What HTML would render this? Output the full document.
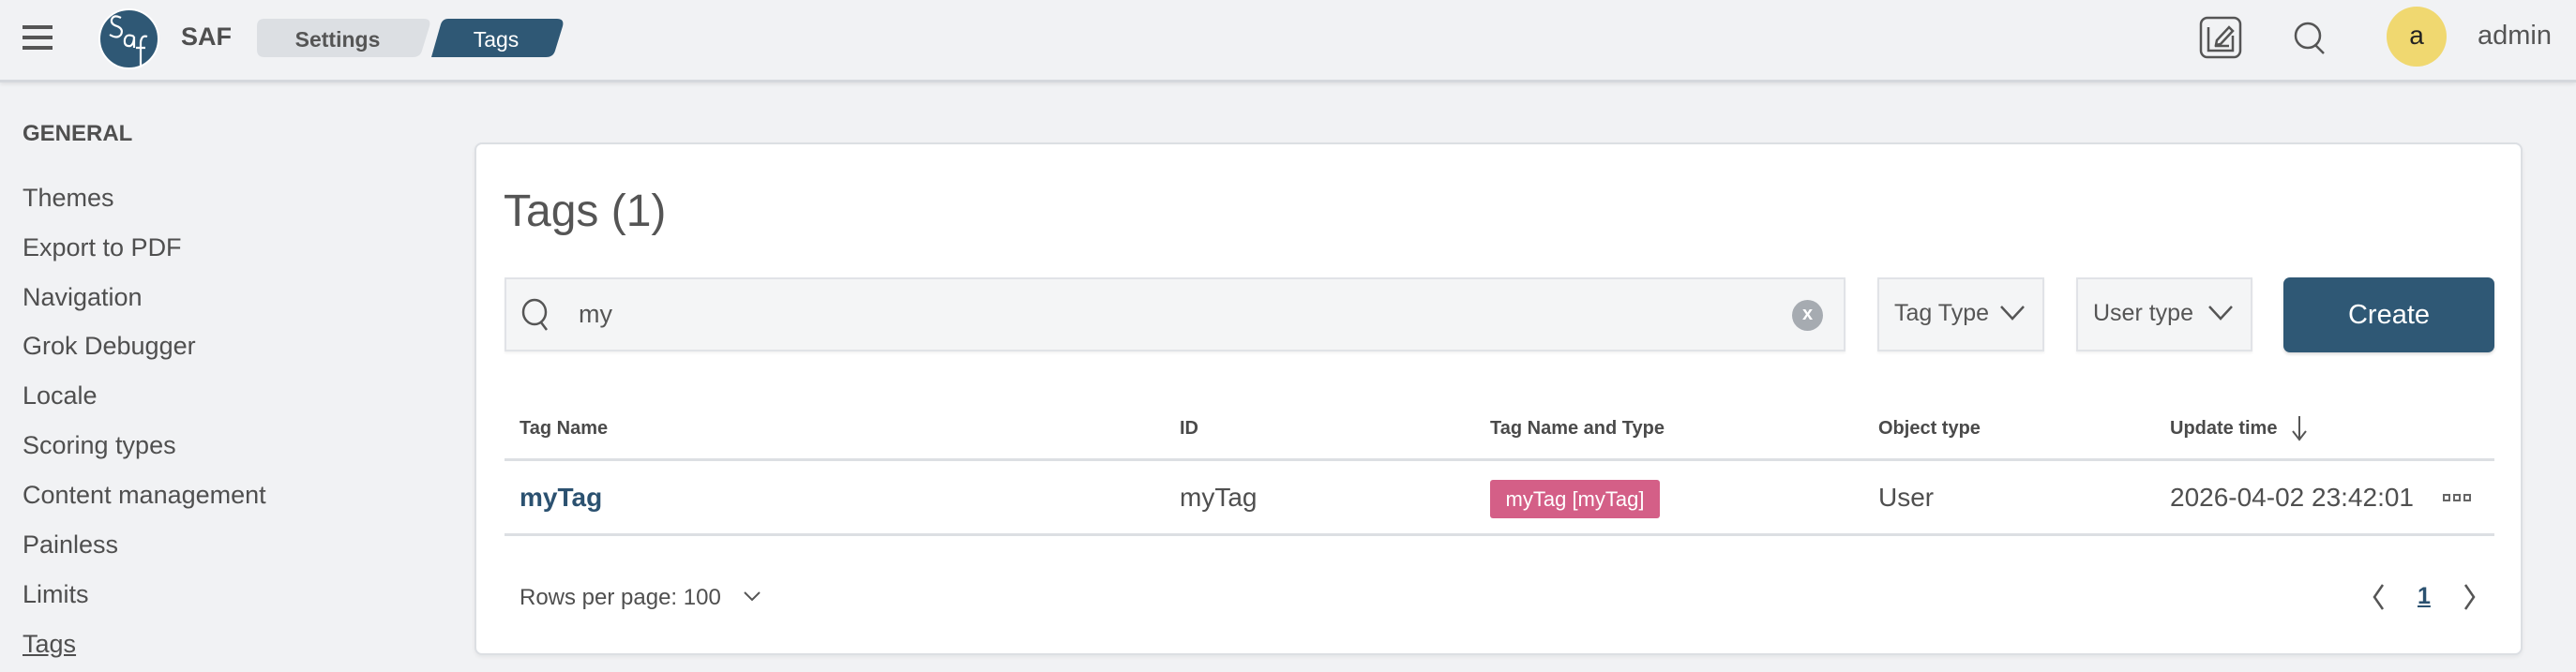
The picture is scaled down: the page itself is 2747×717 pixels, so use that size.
<!DOCTYPE html>
<html><head><meta charset="utf-8"><style>
*{margin:0;padding:0;box-sizing:border-box}
body{width:2747px;height:717px;background:#f1f2f4;font-family:"Liberation Sans",sans-serif;color:#535353;position:relative;overflow:hidden}
.abs{position:absolute}
.hdr{left:0;top:0;width:2747px;height:88px;background:#f1f2f4;border-bottom:3px solid #d5d8dd;box-shadow:0 2px 4px rgba(0,0,0,.08)}
.side{left:24px;font-size:27px;color:#4f4f4f}
.card{left:506px;top:152px;width:2184px;height:547px;background:#fff;border:2px solid #dcdfe3;border-radius:8px;box-shadow:0 2px 4px rgba(0,0,0,.06)}
.th{font-size:20px;font-weight:bold;color:#4a4a4a;top:446px}
.td{font-size:28px;color:#4f4f4f;top:515px}
.box{background:#f4f5f6;border:2px solid #e1e3e7;box-shadow:0 2px 2px rgba(0,0,0,.05)}
</style></head><body>
<div class="abs hdr"></div>
<div class="abs" style="left:24px;top:27px;width:32px;height:4px;background:#555"></div>
<div class="abs" style="left:24px;top:38px;width:32px;height:4px;background:#555"></div>
<div class="abs" style="left:24px;top:49px;width:32px;height:4px;background:#555"></div>
<div class="abs" style="left:105px;top:9px;width:65px;height:65px;border-radius:50%;background:#2f5875;border:2px solid #fff"></div>
<svg class="abs" style="left:105px;top:9px" width="65" height="65" fill="none" stroke="#fff" stroke-width="2.2">
<path d="M24 10 Q16 6 14 12 Q13 17 20 19 Q27 22 24 28 Q20 33 12 28"/>
<path d="M38 30 Q30 26 28 33 Q27 41 34 40 Q38 38 38 30 V42"/>
<path d="M52 30 Q46 28 45 36 V63 M40 42 H50"/>
</svg>
<div class="abs" style="left:193px;top:24px;font-size:27px;font-weight:bold;color:#4f4f4f">SAF</div>
<svg class="abs" style="left:274px;top:20px" width="330" height="42">
<path d="M8 0 H178 Q186 0 184 8 L176 34 Q174 41 166 41 H8 Q0 41 0 33 V8 Q0 0 8 0Z" fill="#dcdfe3"/>
<path d="M200 0 H320 Q328 0 326 8 L318 34 Q316 41 308 41 H186 L196 6 Q198 0 204 0Z" fill="#2f5875"/>
<text x="86" y="30" text-anchor="middle" font-family="Liberation Sans" font-weight="bold" font-size="23" fill="#555">Settings</text>
<text x="255" y="30" text-anchor="middle" font-family="Liberation Sans" font-size="23" fill="#fff">Tags</text>
</svg>
<svg class="abs" style="left:2345px;top:17px" width="46" height="46" fill="none" stroke="#555" stroke-width="2.5">
<rect x="2" y="2" width="42" height="42" rx="7"/>
<path d="M10 12 V37 H36 V21"/><path d="M17 32 H32"/><path d="M19 26 L32 12 L36 16 L23 30 L18 31Z"/>
</svg>
<svg class="abs" style="left:2446px;top:23px" width="36" height="36" fill="none" stroke="#555" stroke-width="2.5">
<circle cx="15" cy="15" r="13"/><path d="M23 25 L32 34"/>
</svg>
<div class="abs" style="left:2545px;top:7px;width:64px;height:64px;border-radius:50%;background:#f0d870;text-align:center;line-height:62px;font-size:28px;color:#222">a</div>
<div class="abs" style="left:2642px;top:22px;font-size:29px;color:#555">admin</div>
<div class="abs side" style="top:129px;font-weight:bold;font-size:24px">GENERAL</div>
<div class="abs side" style="top:196px">Themes</div>
<div class="abs side" style="top:249px">Export to PDF</div>
<div class="abs side" style="top:302px">Navigation</div>
<div class="abs side" style="top:354px">Grok Debugger</div>
<div class="abs side" style="top:407px">Locale</div>
<div class="abs side" style="top:460px">Scoring types</div>
<div class="abs side" style="top:513px">Content management</div>
<div class="abs side" style="top:566px">Painless</div>
<div class="abs side" style="top:619px">Limits</div>
<div class="abs side" style="top:672px;text-decoration:underline">Tags</div>
<div class="abs card"></div>
<div class="abs" style="left:537px;top:198px;font-size:48px;color:#555">Tags (1)</div>
<div class="abs box" style="left:538px;top:296px;width:1430px;height:79px"></div>
<svg class="abs" style="left:556px;top:318px" width="34" height="38" fill="none" stroke="#555" stroke-width="2.5"><ellipse cx="14" cy="15" rx="12" ry="13"/><path d="M21 26 L27 34"/></svg>
<div class="abs" style="left:617px;top:320px;font-size:27px;color:#555">my</div>
<div class="abs" style="left:1911px;top:320px;width:33px;height:33px;border-radius:50%;background:#a6abb1;color:#fff;text-align:center;line-height:31px;font-size:20px;font-weight:bold">x</div>
<div class="abs box" style="left:2002px;top:296px;width:178px;height:79px"></div>
<div class="abs" style="left:2020px;top:320px;font-size:25px;color:#555">Tag Type</div>
<svg class="abs" style="left:2132px;top:325px" width="28" height="18" fill="none" stroke="#555" stroke-width="2.5"><path d="M2 2 L14 15 L26 2"/></svg>
<div class="abs box" style="left:2214px;top:296px;width:188px;height:79px"></div>
<div class="abs" style="left:2232px;top:320px;font-size:25px;color:#555">User type</div>
<svg class="abs" style="left:2354px;top:325px" width="28" height="18" fill="none" stroke="#555" stroke-width="2.5"><path d="M2 2 L14 15 L26 2"/></svg>
<div class="abs" style="left:2435px;top:296px;width:225px;height:80px;background:#2f5875;border-radius:7px;color:#fff;font-size:29px;text-align:center;line-height:80px;box-shadow:0 2px 3px rgba(0,0,0,.15)">Create</div>
<div class="abs th" style="left:554px">Tag Name</div>
<div class="abs th" style="left:1258px">ID</div>
<div class="abs th" style="left:1589px">Tag Name and Type</div>
<div class="abs th" style="left:2003px">Object type</div>
<div class="abs th" style="left:2314px">Update time</div>
<svg class="abs" style="left:2442px;top:442px" width="20" height="30" fill="none" stroke="#555" stroke-width="2"><path d="M10 2 V26 M3 18 L10 27 L17 18"/></svg>
<div class="abs" style="left:538px;top:489px;width:2122px;height:3px;background:#dcdfe3"></div>
<div class="abs td" style="left:554px;font-weight:bold;color:#2b5170">myTag</div>
<div class="abs td" style="left:1258px">myTag</div>
<div class="abs" style="left:1589px;top:512px;width:181px;height:41px;background:#d45f87;border-radius:3px;color:#fff;font-size:22px;text-align:center;line-height:41px">myTag [myTag]</div>
<div class="abs td" style="left:2003px">User</div>
<div class="abs td" style="left:2314px">2026-04-02 23:42:01</div>
<div class="abs" style="left:2605px;top:527px;font-size:0">
<span style="display:inline-block;width:8px;height:8px;border:2px solid #666;margin-right:3px"></span><span style="display:inline-block;width:8px;height:8px;border:2px solid #666;margin-right:3px"></span><span style="display:inline-block;width:8px;height:8px;border:2px solid #666"></span></div>
<div class="abs" style="left:538px;top:569px;width:2122px;height:3px;background:#dcdfe3"></div>
<div class="abs" style="left:554px;top:624px;font-size:24px;color:#4f4f4f">Rows per page: 100</div>
<svg class="abs" style="left:792px;top:629px" width="20" height="14" fill="none" stroke="#555" stroke-width="2"><path d="M2 3 L10 11 L18 3"/></svg>
<svg class="abs" style="left:2528px;top:622px" width="16" height="30" fill="none" stroke="#555" stroke-width="2.5"><path d="M13 2 L4 15 L13 28"/></svg>
<div class="abs" style="left:2578px;top:622px;font-size:25px;font-weight:bold;color:#2b5170;text-decoration:underline">1</div>
<svg class="abs" style="left:2626px;top:622px" width="16" height="30" fill="none" stroke="#555" stroke-width="2.5"><path d="M3 2 L12 15 L3 28"/></svg>
</body></html>
